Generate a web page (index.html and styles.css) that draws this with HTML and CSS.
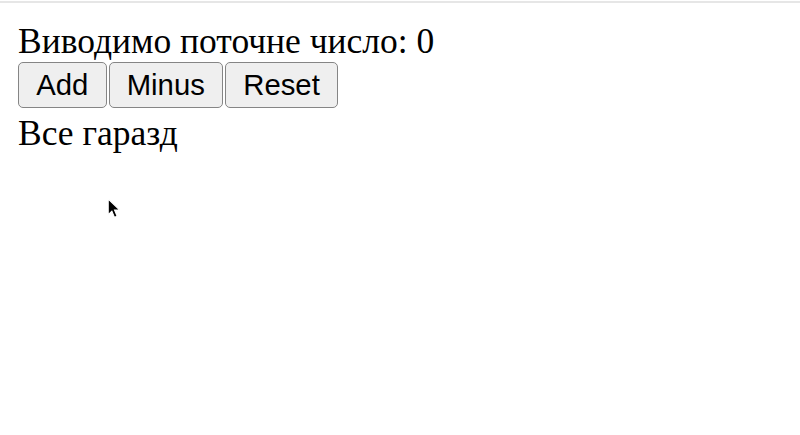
FILE: index.html
```html
<!DOCTYPE html>
<html lang="uk">
<head>
<meta charset="utf-8">
<link rel="stylesheet" href="styles.css">
</head>
<body>
<div class="topline"></div>
<main class="app">
  <div class="counter">Виводимо поточне число: 0</div>
  <div class="buttons">
    <button class="btn">Add</button>
    <button class="btn">Minus</button>
    <button class="btn">Reset</button>
  </div>
  <div class="status">Все гаразд</div>
</main>
<svg class="cursor" width="15" height="23" viewBox="0 0 14 22">
  <path d="M1 1 L1 16 L4.5 12.5 L7 18.5 L9.5 17.5 L7 11.5 L12 11.5 Z" fill="#000" stroke="#fff" stroke-width="1"/>
</svg>
</body>
</html>
```
FILE: styles.css
```css
html, body {
  margin: 0;
  padding: 0;
  background: #fff;
}
body {
  font-family: "Liberation Serif", "Times New Roman", serif;
  font-size: 35.5px;
  color: #000;
  position: relative;
  height: 435px;
  overflow: hidden;
}
.topline {
  height: 2px;
  margin-top: 1px;
  background: #e6e6e6;
}
.app {
  padding: 18px 18px 0;
}
.counter, .status {
  line-height: 40px;
}
.buttons {
  display: flex;
  gap: 2px;
  margin-top: 1px;
}
.status {
  margin-top: 5px;
}
.btn {
  font-family: "Liberation Sans", Arial, sans-serif;
  font-size: 29.3px;
  height: 46px;
  padding: 0 17.2px;
  margin: 0;
  background: #efefef;
  border: 1.5px solid #858585;
  border-radius: 5px;
  color: #000;
}
.cursor {
  position: absolute;
  left: 107px;
  top: 198px;
}
```
